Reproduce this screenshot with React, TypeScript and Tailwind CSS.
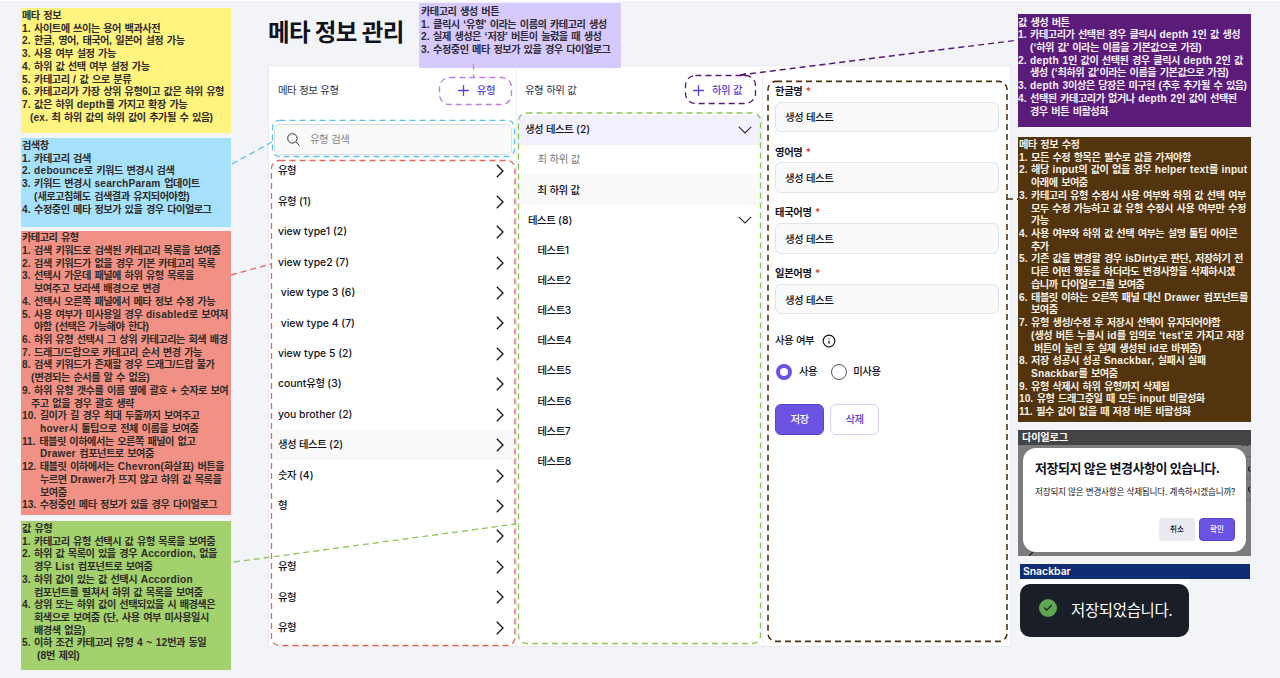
import { Check, Info, Plus } from "lucide-react";

type Line = [indent: string, text: string];

const overview: Line[] = [
  ["pl-0", "1. 사이트에 쓰이는 용어 백과사전"],
  ["pl-0", "2. 한글, 영어, 태국어, 일본어 설정 가능"],
  ["pl-0", "3. 사용 여부 설정 가능"],
  ["pl-0", "4. 하위 값 선택 여부 설정 가능"],
  ["pl-0", "5. 카테고리 / 값 으로 분류"],
  ["pl-0", "6. 카테고리가 가장 상위 유형이고 값은 하위 유형"],
  ["pl-0", "7. 값은 하위 depth를 가지고 확장 가능"],
  ["pl-[8px]", "(ex. 최 하위 값의 하위 값이 추가될 수 있음)"],
];

const search: Line[] = [
  ["pl-0", "1. 카테고리 검색"],
  ["pl-0", "2. debounce로 키워드 변경시 검색"],
  ["pl-0", "3. 키워드 변경시 searchParam 업데이트"],
  ["pl-[12px]", "(새로고침해도 검색결과 유지되어야함)"],
  ["pl-0", "4. 수정중인 메타 정보가 있을 경우 다이얼로그"],
];

const category: Line[] = [
  ["pl-0", "1. 검색 키워드로 검색된 카테고리 목록을 보여줌"],
  ["pl-0", "2. 검색 키워드가 없을 경우 기본 카테고리 목록"],
  ["pl-0", "3. 선택시 가운데 패널에 하위 유형 목록을"],
  ["pl-[12px]", "보여주고 보라색 배경으로 변경"],
  ["pl-0", "4. 선택시 오른쪽 패널에서 메타 정보 수정 가능"],
  ["pl-0", "5. 사용 여부가 미사용일 경우 disabled로 보여져"],
  ["pl-[12px]", "야함 (선택은 가능해야 한다)"],
  ["pl-0", "6. 하위 유형 선택시 그 상위 카테고리는 회색 배경"],
  ["pl-0", "7. 드래그/드랍으로 카테고리 순서 변경 가능"],
  ["pl-0", "8. 검색 키워드가 존재할 경우 드래그/드랍 불가"],
  ["pl-[9px]", "(변경되는 순서를 알 수 없음)"],
  ["pl-0", "9. 하위 유형 갯수를 이름 옆에 괄호 + 숫자로 보여"],
  ["pl-[9px]", "주고 없을 경우 괄호 생략"],
  ["pl-0", "10. 길이가 길 경우 최대 두줄까지 보여주고"],
  ["pl-[18px]", "hover시 툴팁으로 전체 이름을 보여줌"],
  ["pl-0", "11. 태블릿 이하에서는 오른쪽 패널이 없고"],
  ["pl-[18px]", "Drawer 컴포넌트로 보여줌"],
  ["pl-0", "12. 태블릿 이하에서는 Chevron(화살표) 버튼을"],
  ["pl-[18px]", "누르면 Drawer가 뜨지 않고 하위 값 목록을"],
  ["pl-[18px]", "보여줌"],
  ["pl-0", "13. 수정중인 메타 정보가 있을 경우 다이얼로그"],
];

const values: Line[] = [
  ["pl-0", "1. 카테고리 유형 선택시 값 유형 목록을 보여줌"],
  ["pl-0", "2. 하위 값 목록이 있을 경우 Accordion, 없을"],
  ["pl-[12px]", "경우 List 컴포넌트로 보여줌"],
  ["pl-0", "3. 하위 값이 있는 값 선택시 Accordion"],
  ["pl-[12px]", "컴포넌트를 펼쳐서 하위 값 목록을 보여줌"],
  ["pl-0", "4. 상위 또는 하위 값이 선택되있을 시 배경색은"],
  ["pl-[12px]", "회색으로 보여줌 (단, 사용 여부 미사용일시"],
  ["pl-[12px]", "배경색 없음)"],
  ["pl-0", "5. 이하 조건 카테고리 유형 4 ~ 12번과 동일"],
  ["pl-[15px]", "(8번 제외)"],
];

const createCategory: Line[] = [
  ["pl-0", "1. 클릭시 ‘유형’ 이라는 이름의 카테고리 생성"],
  ["pl-0", "2. 실제 생성은 ‘저장’ 버튼이 눌렸을 때 생성"],
  ["pl-0", "3. 수정중인 메타 정보가 있을 경우 다이얼로그"],
];

const createValue: Line[] = [
  ["pl-0", "1. 카테고리가 선택된 경우 클릭시 depth 1인 값 생성"],
  ["pl-[12px]", "(‘하위 값’ 이라는 이름을 기본값으로 가짐)"],
  ["pl-0", "2. depth 1인 값이 선택된 경우 클릭시 depth 2인 값"],
  ["pl-[12px]", "생성 (‘최하위 값’이라는 이름을 기본값으로 가짐)"],
  ["pl-0", "3. depth 3이상은 당장은 미구현 (추후 추가될 수 있음)"],
  ["pl-0", "4. 선택된 카테고리가 없거나 depth 2인 값이 선택된"],
  ["pl-[12px]", "경우 버튼 비활성화"],
];

const editing: Line[] = [
  ["pl-0", "1. 모든 수정 항목은 필수로 값을 가져야함"],
  ["pl-0", "2. 해당 input의 값이 없을 경우 helper text를 input"],
  ["pl-[12px]", "아래에 보여줌"],
  ["pl-0", "3. 카테고리 유형 수정시 사용 여부와 하위 값 선택 여부"],
  ["pl-[12px]", "모두 수정 가능하고 값 유형 수정시 사용 여부만 수정"],
  ["pl-[12px]", "가능"],
  ["pl-0", "4. 사용 여부와 하위 값 선택 여부는 설명 툴팁 아이콘"],
  ["pl-[12px]", "추가"],
  ["pl-0", "5. 기존 값을 변경할 경우 isDirty로 판단, 저장하기 전"],
  ["pl-[12px]", "다른 어떤 행동을 하더라도 변경사항을 삭제하시겠"],
  ["pl-[12px]", "습니까 다이얼로그를 보여줌"],
  ["pl-0", "6. 태블릿 이하는 오른쪽 패널 대신 Drawer 컴포넌트를"],
  ["pl-[12px]", "보여줌"],
  ["pl-0", "7. 유형 생성/수정 후 저장시 선택이 유지되어야함"],
  ["pl-[12px]", "(생성 버튼 누를시 id를 임의로 ‘test’로 가지고 저장"],
  ["pl-[15px]", "버튼이 눌린 후 실제 생성된 id로 바꿔줌)"],
  ["pl-0", "8. 저장 성공시 성공 Snackbar, 실패시 실패"],
  ["pl-[12px]", "Snackbar를 보여줌"],
  ["pl-0", "9. 유형 삭제시 하위 유형까지 삭제됨"],
  ["pl-0", "10. 유형 드래그중일 때 모든 input 비활성화"],
  ["pl-0", "11. 필수 값이 없을 때 저장 버튼 비활성화"],
];

const categories = [
  "유형",
  "유형 (1)",
  "view type1 (2)",
  "view type2 (7)",
  "\u00a0view type 3 (6)",
  "\u00a0view type 4 (7)",
  "view type 5 (2)",
  "count유형 (3)",
  "you brother (2)",
  "생성 테스트 (2)",
  "숫자 (4)",
  "형",
  "",
  "유형",
  "유형",
  "유형",
];

// Tightens Hangul runs only; Latin words keep their own spacing.
function Ko({
  text,
  tracking = "tracking-[-0.45px]",
  latin = "tracking-normal",
}: {
  text: string;
  tracking?: string;
  latin?: string;
}) {
  return (
    <span className="whitespace-pre">
      {text.split(/([가-힣]+|[A-Za-z]+)/).map((part, i) =>
        i % 2 ? (
          <span key={i} className={/[A-Za-z]/.test(part) ? latin : tracking}>
            {part}
          </span>
        ) : (
          part
        ),
      )}
    </span>
  );
}

function Note({ title, lines, className }: { title: string; lines: Line[]; className: string }) {
  return (
    <section
      className={`shrink-0 font-['Liberation_Sans','Noto_Sans_CJK_KR',sans-serif] text-[10.2px] leading-[12.72px] font-bold [word-spacing:0.76px] ${className}`}
    >
      <h2>
        <Ko text={title} tracking="tracking-[-0.52px]" />
      </h2>
      {lines.map(([indent, text], i) => (
        <p key={i} className={indent}>
          <Ko text={text} tracking="tracking-[-0.52px]" latin="tracking-[0.2px]" />
        </p>
      ))}
    </section>
  );
}

function Chevron({ down }: { down?: boolean }) {
  return down ? (
    <svg className="h-[8px] w-[14px]" viewBox="0 0 14 8" fill="none" stroke="#23252f" strokeWidth="1.1">
      <path d="M0.8 0.8 7 7 13.2 0.8" />
    </svg>
  ) : (
    <svg className="h-[14px] w-[8px]" viewBox="0 0 8 14" fill="none" stroke="#10121c" strokeWidth="1.3">
      <path d="M0.8 0.8 7 7 0.8 13.2" />
    </svg>
  );
}

function AddButton({ label }: { label: string }) {
  return (
    <button className="flex items-center gap-[5px] text-[10.4px] font-medium text-[#5843cf]">
      <Plus size={17} strokeWidth={1.8} />
      <Ko text={label} />
    </button>
  );
}

function Field({ label }: { label: string }) {
  return (
    <label className="flex h-[60.8px] flex-col">
      <span className="flex h-[17px] items-center gap-[3px] pb-[2px] text-[10.3px] leading-none font-bold">
        <Ko text={label} tracking="tracking-[-0.3px]" /> <span className="text-[#e0433c]">*</span>
      </span>
      <span className="mt-[1px] flex h-[30.5px] items-center rounded-[6px] border border-[#e2e3e6] bg-[#fafafa] px-[9px] pt-[2.5px] text-[10.4px] font-medium">
        <Ko text="생성 테스트" />
      </span>
    </label>
  );
}

function Annotations() {
  return (
    <svg
      className="pointer-events-none absolute -top-px left-0"
      width="1280"
      height="678"
      viewBox="0 0 1280 678"
      fill="none"
      strokeWidth="1.3"
      strokeDasharray="6 4"
    >
      <g stroke="#c07ee8">
        <rect x="439.5" y="77.5" width="72" height="27" rx="10" />
        <path d="M473.5 64V78" />
      </g>
      <g stroke="#5cc3ea">
        <rect x="272.5" y="120.3" width="242" height="36.2" rx="7" />
        <path d="M232 164 272 142" />
      </g>
      <g stroke="#e2685c">
        <rect x="271.5" y="160.5" width="243.5" height="485" rx="8" />
        <path d="M231 275 271 264" />
      </g>
      <g stroke="#8cc653">
        <rect x="518.5" y="113" width="242" height="530.5" rx="8" />
        <path d="M234 562 516 524" />
      </g>
      <g stroke="#57187a">
        <rect x="685.5" y="75.5" width="70" height="28" rx="10" />
        <path d="M740 75 1018 40" />
        <path d="M746 73.500 740 75 746.500 75.500" strokeDasharray="none" strokeWidth="1" />
      </g>
      <g stroke="#4f3313" strokeWidth="1.6">
        <rect x="768" y="81.4" width="239" height="560" rx="8" />
        <path d="M1007 199H1018" />
      </g>
    </svg>
  );
}

export default function App() {
  return (
    <div className="relative flex h-[678px] w-[1280px] overflow-hidden border-t border-white bg-[#f3f4f8] font-[Inter,'Noto_Sans_CJK_KR',sans-serif] text-[#10121c]">
      <aside className="ml-[21px] flex w-[210px] shrink-0 flex-col text-[#2f2c28]">
        <Note title="메타 정보" lines={overview} className="mt-[7px] h-[125px] bg-[#fff47f] pt-[2px] pl-[1px]" />
        <Note title="검색창" lines={search} className="mt-[5px] h-[89px] bg-[#a6e1fc] pt-[2px] pl-[1px]" />
        <Note title="카테고리 유형" lines={category} className="mt-[4px] h-[284px] bg-[#f19185] pt-[1.2px] pl-[1px]" />
        <Note title="값 유형" lines={values} className="mt-[6px] h-[149px] bg-[#a2d16d] pt-[2px] pl-[1px]" />
      </aside>

      <main className="ml-[37px] flex w-[743px] shrink-0 flex-col">
        <h1 className="flex h-[64px] items-center text-[23.5px] font-bold tracking-[-0.65px]">메타 정보 관리</h1>
        <div className="flex h-[582px] border border-[#e8e9ee] bg-white">
          <section className="flex w-[247px] flex-col">
            <header className="flex h-[49px] shrink-0 items-center justify-between pr-[21px] pl-[9px]">
              <h2 className="text-[10.4px] font-normal text-[#30364a]">
                <Ko text="메타 정보 유형" />
              </h2>
              <AddButton label="유형" />
            </header>
            <div className="mt-[9px] mr-[4px] ml-[5px] flex h-[31px] shrink-0 items-center rounded-[6px] border border-[#dddee1] bg-[#fafafa] pl-[12px] text-[10.4px] text-[#85878e]">
              <svg className="mr-[10px] size-[13px]" viewBox="0 0 13 13" fill="none" stroke="#30323a" strokeWidth="1">
                <circle cx="5.4" cy="5.4" r="4.7" />
                <path d="m8.800 8.800 3.700 3.700" />
              </svg>
              <Ko text="유형 검색" />
            </div>
            <ul className="mt-[1px] text-[10.4px] font-medium">
              {categories.map((name, i) => (
                <li
                  key={i}
                  className={`flex h-[30.45px] items-center justify-between pr-[12px] pl-[9px] ${i === 9 ? "bg-[#f9f9f9]" : ""}`}
                >
                  <Ko text={name} />
                  <Chevron />
                </li>
              ))}
            </ul>
          </section>

          <section className="flex w-[247px] flex-col border-x border-[#eeeff3]">
            <header className="flex h-[49px] shrink-0 items-center justify-between pr-[20px] pl-[8px]">
              <h2 className="text-[10.4px] font-normal text-[#30364a]">
                <Ko text="유형 하위 값" />
              </h2>
              <AddButton label="하위 값" />
            </header>
            <ul className="text-[10.4px] font-medium">
              <li className="flex h-[30.15px] items-center justify-between bg-[#f3f1fd] pr-[10px] pl-[8px]">
                <Ko text="생성 테스트 (2)" /> <Chevron down />
              </li>
              <li className="flex h-[30.15px] items-center pl-[20.5px] font-normal text-[#777981]">
                <Ko text="최 하위 값" />
              </li>
              <li className="flex h-[30.15px] items-center bg-[#f9f9f9] pl-[20.5px]">
                <Ko text="최 하위 값" />
              </li>
              <li className="flex h-[30.15px] items-center justify-between pr-[10px] pl-[11px]">
                <Ko text="테스트 (8)" /> <Chevron down />
              </li>
              {[1, 2, 3, 4, 5, 6, 7, 8].map((n) => (
                <li key={n} className="flex h-[30.15px] items-center pl-[20.5px]">
                  <Ko text={`테스트${n}`} />
                </li>
              ))}
            </ul>
          </section>

          <section className="flex flex-1 flex-col pt-[17.5px] pr-[11px] pl-[12px] text-[10.4px]">
            <Field label="한글명" />
            <Field label="영어명" />
            <Field label="태국어명" />
            <Field label="일본어명" />
            <div className="mt-[6px] flex h-[16px] items-center gap-[8px] leading-none font-medium">
              <span className="pt-[2px]">
                <Ko text="사용 여부" />
              </span>
              <Info size={14} strokeWidth={2} />
            </div>
            <div className="mt-[15px] flex h-[16px] items-center leading-none font-medium">
              <span className="ml-[1px] size-[16px] rounded-full border-[4.5px] border-[#6b52e0] bg-white" />
              <span className="ml-[7px] pt-[2px]">
                <Ko text="사용" />
              </span>
              <span className="ml-[13.5px] size-[16px] rounded-full border border-[#4d5566] bg-white" />
              <span className="ml-[6.5px] pt-[2px]">
                <Ko text="미사용" />
              </span>
            </div>
            <div className="mt-[24.5px] flex gap-[6px] text-[10.4px] font-medium">
              <button className="h-[31px] w-[49px] rounded-[6px] border border-[#5843cf] bg-[#6b52e0] text-white">
                <Ko text="저장" />
              </button>
              <button className="h-[31px] w-[49px] rounded-[6px] border border-[#d8d0fb] bg-white text-[#5843cf]">
                <Ko text="삭제" />
              </button>
            </div>
          </section>
        </div>
      </main>

      <aside className="ml-[7px] flex w-[233px] shrink-0 flex-col">
        <Note title="값 생성 버튼" lines={createValue} className="mt-[13px] h-[113px] bg-[#5a1c78] pt-[2.5px] text-[#f6eefa]" />
        <Note
          title="메타 정보 수정"
          lines={editing}
          className="mt-[10px] h-[285px] bg-[#52340f] pt-[2px] pl-[1px] text-[#f8f1e6]"
        />
        <div className="relative mt-[8px] flex h-[126px] shrink-0 flex-col bg-[#7c7c7d]">
          <svg className="absolute inset-0" width="233" height="126" viewBox="0 0 233 126" fill="none" stroke="#1c1c1e" strokeWidth="1.2">
            <path d="M224 14.500q1 1.500 2.500 0M228 14.500q1 1.500 2.500 0M232 36.500q-3 2 0 5M232 57q-3 2 0 5M11 126l4-4" />
            <path d="M228 26.500h5M228 48.500h5M228 69.500h5" stroke="#606062" strokeWidth="0.8" />
          </svg>
          <h2 className="relative flex h-[15px] items-center bg-[#444] pl-[4px] text-[10.2px] font-bold text-white">
            <Ko text="다이얼로그" tracking="tracking-[-0.2px]" />
          </h2>
          <div className="relative mx-[5px] mt-[3px] flex h-[104px] flex-col rounded-[13px] bg-white pr-[11px] pl-[12px]">
            <h3 className="mt-[11px] text-[13px] leading-[18px] font-bold tracking-[-0.44px] whitespace-nowrap">
              저장되지 않은 변경사항이 있습니다.
            </h3>
            <p className="mt-[7.5px] text-[8.600px] leading-[14px] tracking-[-0.2px] whitespace-nowrap">
              저장되지 않은 변경사항은 삭제됩니다. 계속하시겠습니까?
            </p>
            <div className="mt-[19.5px] flex justify-end gap-[4px] text-[7.5px] font-medium">
              <button className="h-[23px] w-[36px] rounded-[4px] bg-[#e9eaef]">취소</button>
              <button className="h-[23px] w-[36px] rounded-[4px] border border-[#5843cf] bg-[#6b52e0] text-white">확인</button>
            </div>
          </div>
        </div>
        <h2 className="mt-[8px] ml-[2px] flex h-[15px] w-[230px] shrink-0 items-center bg-[#0f2c75] pt-[1px] pl-[3px] text-[10.4px] font-semibold text-white">
          Snackbar
        </h2>
        <div className="ml-[2px] w-[169px] bg-white pt-[5px]">
          <div className="flex h-[53px] items-center rounded-[10px] bg-[#191e27] pl-[19px] text-[15.5px] tracking-[-0.35px] text-white">
            <span className="mr-[14px] mb-[5px] flex size-[18px] items-center justify-center rounded-full bg-[#5fa653] text-[#191e27]">
              <Check size={10} strokeWidth={3} />
            </span>
            저장되었습니다.
          </div>
        </div>
      </aside>

      <Note
        title="카테고리 생성 버튼"
        lines={createCategory}
        className="absolute top-[2px] left-[419px] h-[65px] w-[202px] bg-[#d6c9fb] pt-[3px] pl-[2px] text-[#2f2c38]"
      />
      <Annotations />
    </div>
  );
}
